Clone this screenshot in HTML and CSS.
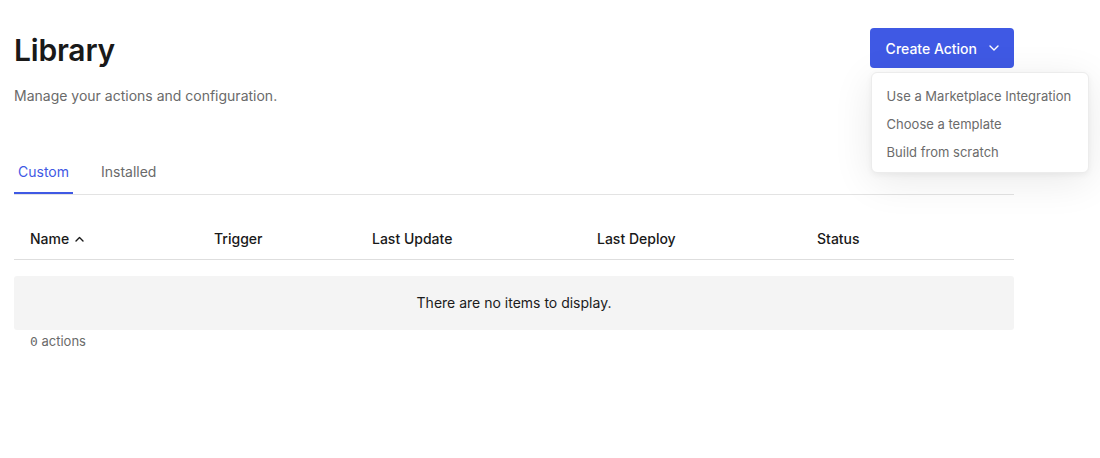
FILE: index.html
```html
<!DOCTYPE html>
<html lang="en">
<head>
<meta charset="utf-8">
<title>Library</title>
<link rel="stylesheet" href="styles.css">
</head>
<body>
<main class="page">
  <header class="page-header">
    <div class="heading">
      <h1 class="title">Library</h1>
      <p class="subtitle">Manage your actions and configuration.</p>
    </div>
    <div class="create">
      <button class="create-btn" type="button">Create Action
        <svg class="chev" width="10" height="6" viewBox="0 0 10 6" aria-hidden="true"><path d="M1 1l4 4 4-4" fill="none" stroke="currentColor" stroke-width="1.4" stroke-linecap="round" stroke-linejoin="round"/></svg>
      </button>
      <ul class="menu">
        <li class="menu-item">Use a Marketplace Integration</li>
        <li class="menu-item">Choose a template</li>
        <li class="menu-item">Build from scratch</li>
      </ul>
    </div>
  </header>

  <nav class="tabs">
    <a class="tab active">Custom</a>
    <a class="tab">Installed</a>
  </nav>

  <section class="table">
    <div class="thead">
      <div class="th">Name
        <svg class="sort" width="9" height="6" viewBox="0 0 9 6" aria-hidden="true"><path d="M1 5l3.5-3.5L8 5" fill="none" stroke="currentColor" stroke-width="1.4" stroke-linecap="round" stroke-linejoin="round"/></svg>
      </div>
      <div class="th">Trigger</div>
      <div class="th">Last Update</div>
      <div class="th">Last Deploy</div>
      <div class="th">Status</div>
    </div>
    <div class="empty">There are no items to display.</div>
  </section>
  <p class="count"><span class="num">0</span> actions</p>
</main>
</body>
</html>
```

FILE: styles.css
```css
* { box-sizing: border-box; }
html, body { margin: 0; padding: 0; background: #fff; }
body {
  font-family: Inter, "Noto Sans", "Liberation Sans", sans-serif;
  color: #1b1b1b;
}
.page {
  width: 1000px;
  margin-left: 14px;
  padding-top: 28px;
}
.page-header {
  display: flex;
  justify-content: space-between;
  align-items: flex-start;
}
.title {
  margin: 2px 0 0;
  font-size: 30px;
  line-height: 40px;
  font-weight: 600;
  letter-spacing: -0.2px;
  color: #191919;
}
.subtitle {
  margin: 16px 0 0;
  font-size: 14px;
  line-height: 20px;
  color: #6a6a6a;
}
.create { position: relative; }
.create-btn {
  display: flex;
  align-items: center;
  gap: 10px;
  height: 40px;
  padding: 0 15px 0 16px;
  border: 0;
  border-radius: 4px;
  background: #3f59e4;
  color: #fff;
  font-family: inherit;
  font-size: 14px;
  font-weight: 500;
}
.chev { margin-left: 2px; }
.menu {
  position: absolute;
  top: 44px;
  left: 1px;
  width: 218px;
  margin: 0;
  padding: 9px 0 6px;
  list-style: none;
  background: #fff;
  border: 1px solid #ececec;
  border-radius: 6px;
  box-shadow: 0 8px 40px rgba(0,0,0,0.09), 0 2px 6px rgba(0,0,0,0.05);
  z-index: 2;
}
.menu-item {
  padding: 0 15px;
  font-size: 13px;
  line-height: 28px;
  color: #6b6b6b;
  white-space: nowrap;
}
.tabs {
  display: flex;
  margin-top: 55px;
  border-bottom: 1px solid #e3e3e3;
}
.tab {
  display: block;
  padding: 0 4px;
  margin-right: 24px;
  height: 33px;
  line-height: 22px;
  font-size: 14px;
  color: #6a6a6a;
  border-bottom: 2px solid transparent;
}
.tab.active {
  color: #3f59e4;
  border-bottom-color: #3f59e4;
}
.table { margin-top: 24px; }
.thead {
  display: grid;
  grid-template-columns: 184px 158px 225px 220px 1fr;
  border-bottom: 1px solid #dedede;
  height: 41px;
}
.th {
  display: flex;
  align-items: flex-start;
  gap: 6px;
  padding-left: 16px;
  padding-top: 10px;
  font-size: 14px;
  font-weight: 500;
  line-height: 20px;
  color: #191919;
}
.sort { margin-top: 7px; }
.empty {
  margin-top: 16px;
  height: 54px;
  line-height: 54px;
  text-align: center;
  background: #f4f4f4;
  border-radius: 3px;
  font-size: 14px;
  color: #1b1b1b;
}
.count {
  margin: 3px 0 0 16px;
  font-size: 13px;
  line-height: 16px;
  color: #6a6a6a;
}
.num {
  font-family: "DejaVu Sans Mono", "Liberation Mono", monospace;
  font-size: 13px;
}
```
